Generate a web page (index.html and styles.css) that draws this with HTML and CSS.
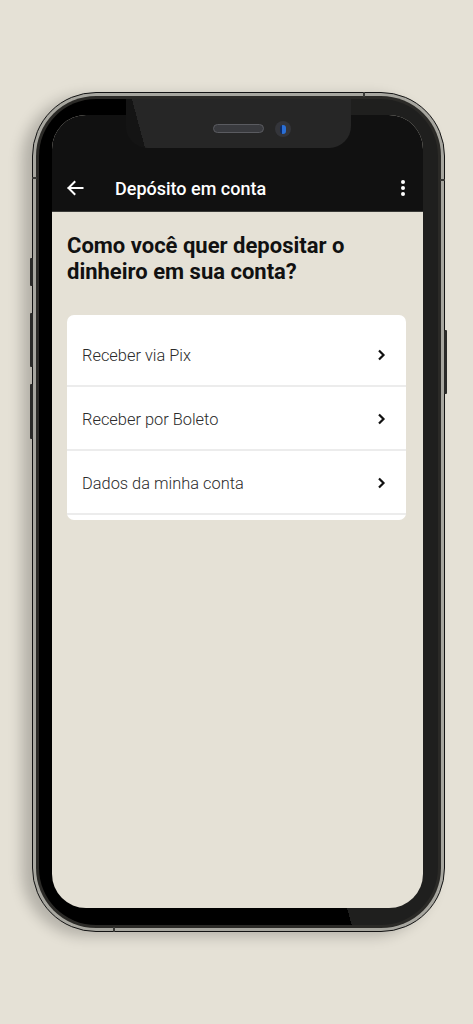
FILE: index.html
```html
<!DOCTYPE html>
<html lang="pt-BR">
<head>
<meta charset="utf-8">
<title>Depósito em conta</title>
<link rel="stylesheet" href="styles.css">
</head>
<body>
<div class="phone">
  <span class="btn btn-l1"></span>
  <span class="btn btn-l2"></span>
  <span class="btn btn-l3"></span>
  <span class="btn btn-r1"></span>
  <span class="ant ant-top"></span>
  <span class="ant ant-bottom"></span>
  <span class="ant ant-left"></span>
  <span class="ant ant-right"></span>
  <div class="band">
    <div class="bezel">
      <div class="notch">
        <span class="speaker"></span>
        <span class="camera"><span class="lens"></span></span>
      </div>
      <div class="screen">
        <header class="appbar">
          <div class="appbar-row">
            <svg class="back" width="18" height="16" viewBox="0 0 18 16" aria-hidden="true">
              <path d="M16.5 8H2.5M8.5 2L2.5 8l6 6" fill="none" stroke="#fff" stroke-width="2" stroke-linecap="square"/>
            </svg>
            <h1 class="title">Depósito em conta</h1>
            <svg class="more" width="6" height="18" viewBox="0 0 6 18" aria-hidden="true">
              <circle cx="3" cy="3" r="2" fill="#fff"/>
              <circle cx="3" cy="9" r="2" fill="#fff"/>
              <circle cx="3" cy="15" r="2" fill="#fff"/>
            </svg>
          </div>
        </header>
        <main class="content">
          <h2 class="question">Como você quer depositar o dinheiro em sua conta?</h2>
          <ul class="card">
            <li class="row first"><span>Receber via Pix</span>
              <svg class="chev" width="10" height="14" viewBox="0 0 10 14" aria-hidden="true"><path d="M3 2.5l4.5 4.5L3 11.5" fill="none" stroke="#111" stroke-width="2.2"/></svg>
            </li>
            <li class="row"><span>Receber por Boleto</span>
              <svg class="chev" width="10" height="14" viewBox="0 0 10 14" aria-hidden="true"><path d="M3 2.5l4.5 4.5L3 11.5" fill="none" stroke="#111" stroke-width="2.2"/></svg>
            </li>
            <li class="row"><span>Dados da minha conta</span>
              <svg class="chev" width="10" height="14" viewBox="0 0 10 14" aria-hidden="true"><path d="M3 2.5l4.5 4.5L3 11.5" fill="none" stroke="#111" stroke-width="2.2"/></svg>
            </li>
          </ul>
        </main>
      </div>
    </div>
  </div>
</div>
</body>
</html>
```
FILE: styles.css
```css
* { box-sizing: border-box; }
html, body { margin: 0; padding: 0; }
body {
  background: #e5e1d6;
  font-family: Roboto, "Noto Sans", "Liberation Sans", sans-serif;
  width: 473px;
  height: 1024px;
  overflow: hidden;
}
.phone {
  position: relative;
  margin: 92px 0 0 32px;
  width: 413px;
  height: 840px;
  border: 1px solid #141414;
  border-radius: 64px;
  background: #a7a69f;
  padding: 3px;
  box-shadow: -10px 4px 14px rgba(0,0,0,0.22);
}
.band {
  height: 100%;
  border-radius: 60px;
  background: #2b2a27;
  padding: 3px;
}
.bezel {
  position: relative;
  height: 100%;
  border-radius: 57px;
  background: linear-gradient(75deg, #000 50.4%, #1f1f1e 50.4%);
  padding: 16px 15px 17px 13px;
}
.notch {
  position: absolute;
  left: 87px;
  top: 0;
  width: 225px;
  height: 49px;
  background: linear-gradient(75deg, #141414 8%, #262626 8%);
  border-radius: 0 0 22px 22px;
  z-index: 2;
}
.speaker {
  position: absolute;
  left: 87px;
  top: 25px;
  width: 51px;
  height: 9px;
  border-radius: 5px;
  background: #393a3e;
  border: 1px solid #5a5b60;
}
.camera {
  position: absolute;
  left: 149px;
  top: 22px;
  width: 16px;
  height: 16px;
  border-radius: 50%;
  background: #34353a;
  display: flex;
  align-items: center;
  justify-content: center;
}
.lens {
  width: 6px;
  height: 9px;
  border-radius: 3px;
  background: linear-gradient(90deg, #0d2a66 40%, #2a6fd6 40%);
}
.screen {
  height: 100%;
  border-radius: 34px;
  overflow: hidden;
  background: #e5e1d6;
  display: flex;
  flex-direction: column;
}
.appbar {
  height: 97px;
  flex: none;
  background: #111111;
  padding-top: 50px;
  border-bottom: 1px solid #3a3a38;
}
.appbar-row {
  height: 46px;
  display: flex;
  align-items: center;
  padding: 0 17px 0 14px;
}
.back { flex: none; }
.title {
  margin: 0 0 0 31px;
  flex: 1;
  color: #fff;
  font-size: 18px;
  font-weight: 500;
}
.more { flex: none; }
.content {
  padding: 21px 17px 0 15px;
}
.question {
  margin: 0 0 30px;
  font-size: 22px;
  line-height: 26px;
  font-weight: 700;
  color: #111;
  padding-right: 30px;
}
.card {
  list-style: none;
  margin: 0;
  padding: 0 0 5px;
  background: #fff;
  border-radius: 7px;
}
.row {
  height: 64px;
  border-bottom: 2px solid #ececec;
  display: flex;
  align-items: center;
  justify-content: space-between;
  padding: 2px 20px 0 15px;
  font-size: 16.4px;
  font-weight: 300;
  color: #2b2b2b;
}
.row.first {
  height: 72px;
  padding-top: 10px;
}
.chev { flex: none; }
.btn {
  position: absolute;
  width: 3px;
  background: #2a2a28;
  border-radius: 1px;
}
.btn-l1 { left: -3px; top: 165px; height: 28px; }
.btn-l2 { left: -3px; top: 220px; height: 54px; }
.btn-l3 { left: -3px; top: 291px; height: 55px; }
.btn-r1 { right: -3px; top: 237px; height: 64px; }
.ant {
  position: absolute;
  background: #3a3a37;
}
.ant-top { top: -1px; left: 330px; width: 2px; height: 5px; }
.ant-bottom { bottom: -1px; left: 80px; width: 2px; height: 5px; }
.ant-left { left: -1px; top: 84px; width: 5px; height: 2px; }
.ant-right { right: -1px; top: 86px; width: 5px; height: 2px; }
```
